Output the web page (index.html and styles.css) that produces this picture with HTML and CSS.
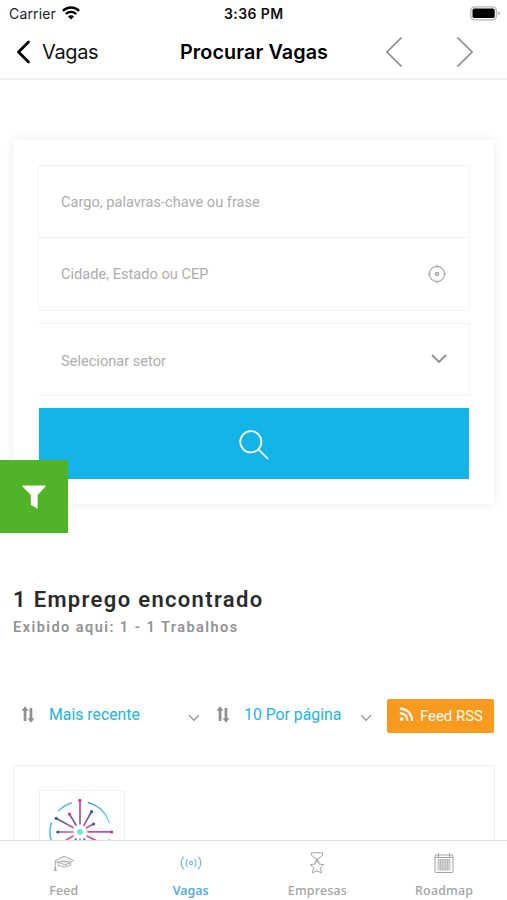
FILE: index.html
```html
<!DOCTYPE html>
<html lang="pt-BR">
<head>
<meta charset="utf-8">
<title>Procurar Vagas</title>
<link rel="stylesheet" href="styles.css">
</head>
<body>
<div class="screen">
  <div class="status">
    <span class="carrier">Carrier</span>
    <svg class="wifi" width="18" height="14" viewBox="0 0 18 14" fill="none" stroke="#000" stroke-width="2.4"><path d="M.9 4.8a11.6 11.6 0 0 1 16.2 0M3.8 8a7.4 7.4 0 0 1 10.4 0"/><path d="M9 13.6 6 10.5a4.2 4.2 0 0 1 6 0z" fill="#000" stroke="none"/></svg>
    <span class="time">3:36 PM</span>
    <svg class="battery" width="31" height="15" viewBox="0 0 31 15"><rect x=".8" y=".8" width="25.6" height="13" rx="3.8" fill="#fff" stroke="#b5b5b5" stroke-width="1.3"/><rect x="2.5" y="2.5" width="22.2" height="9.6" rx="1.9"/><path d="M28 5.2q2 .7 2 2.1t-2 2.1z" fill="#b5b5b5"/></svg>
  </div>
  <header class="nav">
    <svg class="back" width="15" height="24" viewBox="0 0 15 24" fill="none" stroke="#000" stroke-width="2.8" stroke-linecap="round" stroke-linejoin="round"><path d="M12.5 2 2.5 12l10 10"/></svg>
    <span class="back-label">Vagas</span>
    <h1>Procurar Vagas</h1>
    <svg class="prev" width="18" height="32" viewBox="0 0 18 32" fill="none" stroke="#8c8c8c" stroke-width="1.7"><path d="M16.5 1.5 2 16l14.5 14.5"/></svg>
    <svg class="next" width="18" height="32" viewBox="0 0 18 32" fill="none" stroke="#8c8c8c" stroke-width="1.7"><path d="M1.5 1.5 16 16 1.5 30.5"/></svg>
  </header>
  <main>
    <form class="search">
      <div class="field"><span>Cargo, palavras-chave ou frase</span></div>
      <div class="field second"><span>Cidade, Estado ou CEP</span>
        <svg width="20" height="20" viewBox="0 0 20 20" fill="none" stroke="#aaa" stroke-width="1.2"><circle cx="10" cy="10" r="7.6"/><circle cx="10" cy="10" r="1.7" fill="#ccc"/><path d="M10 .8v2.8M10 16.4v2.8M.8 10h2.8M16.4 10h2.8"/></svg>
      </div>
      <div class="field select"><span>Selecionar setor</span>
        <svg class="chev" width="18" height="12" viewBox="0 0 18 12" fill="none" stroke="#909090" stroke-width="1.9"><path d="m2 2 7 7 7-7"/></svg>
      </div>
      <div class="submit"><svg width="32" height="32" viewBox="0 0 32 32" fill="none" stroke="#fff" stroke-width="1.7" stroke-linecap="round"><circle cx="12.8" cy="12.8" r="10.6"/><path d="m20.6 20.6 9 8.8"/></svg></div>
    </form>
    <section class="summary">
      <h2>1 Emprego encontrado</h2>
      <p>Exibido aqui: 1 - 1 Trabalhos</p>
    </section>
    <div class="tools">
      <div class="sort first">
        <svg width="14" height="17" viewBox="0 0 14 17" fill="#8f8f8f"><path d="M4 .3.6 4.8h2.1V15h2.7V4.8h2.1zM10 16.7l3.4-4.5h-2.1V2H8.6v10.2H6.5z"/></svg>
        <span>Mais recente</span>
        <svg class="small-chev" width="12" height="8" viewBox="0 0 12 8" fill="none" stroke="#999" stroke-width="1.3"><path d="m1.2 1.3 4.8 5 4.8-5"/></svg>
      </div>
      <div class="sort">
        <svg width="14" height="17" viewBox="0 0 14 17" fill="#8f8f8f"><path d="M4 .3.6 4.8h2.1V15h2.7V4.8h2.1zM10 16.7l3.4-4.5h-2.1V2H8.6v10.2H6.5z"/></svg>
        <span>10 Por página</span>
        <svg class="small-chev" width="12" height="8" viewBox="0 0 12 8" fill="none" stroke="#999" stroke-width="1.3"><path d="m1.2 1.3 4.8 5 4.8-5"/></svg>
      </div>
      <div class="rss">
        <svg width="15" height="15" viewBox="0 0 15 15" fill="none" stroke="#fff" stroke-width="2.2"><circle cx="2.7" cy="12.1" r="1.9" fill="#fff" stroke="none"/><path d="M.8 6.1a7.5 7.5 0 0 1 7.7 7.8M.8 1.7a12 12 0 0 1 12.3 12.2"/></svg>
        <span>Feed RSS</span>
      </div>
    </div>
    <article class="job">
      <div class="logo">
        <svg width="84" height="84" viewBox="39 791 84 84" fill="none" stroke-linecap="round">
          <defs>
            <linearGradient id="ray" gradientUnits="userSpaceOnUse" x1="80" y1="800" x2="80" y2="826"><stop stop-color="#e52d92"/><stop offset="1" stop-color="#6558bd"/></linearGradient>
            <linearGradient id="ray2" gradientUnits="userSpaceOnUse" x1="56" y1="818" x2="74" y2="829"><stop stop-color="#345bad"/><stop offset="1" stop-color="#d655b1"/></linearGradient>
            <linearGradient id="ray3" gradientUnits="userSpaceOnUse" x1="92" y1="811" x2="84" y2="827"><stop stop-color="#345bad"/><stop offset="1" stop-color="#cc55b5"/></linearGradient>
            <linearGradient id="arc" gradientUnits="userSpaceOnUse" x1="88" y1="803" x2="109" y2="823"><stop stop-color="#3f9eed"/><stop offset="1" stop-color="#7aeadd"/></linearGradient>
          </defs>
          <g stroke-width="1.6">
            <path d="M80 801L80.01 824" stroke="url(#ray)"/><path d="M69.7 814.5 76 825" stroke="url(#ray)"/>
            <path d="m56.5 818.5 16.5 9M58 832h15M73 836l-10 6" stroke="url(#ray2)"/>
            <path d="m91.3 812-7.5 13.5M93 824.3l-6.5 3.5" stroke="url(#ray3)"/>
            <path d="M88 831.9h23M87 836l10 5" stroke="#bd4eb0"/><path d="m76 839-6 9M84 839l6 9" stroke="#4265af"/><path d="M80 839v16" stroke="#c65ab5"/>
          </g>
          <g fill="#e52d87"><circle cx="79.8" cy="800.3" r="1.6"/><circle cx="69.4" cy="814" r="1.6"/><circle cx="111.6" cy="832" r="1.6"/></g>
          <g fill="#345bad"><circle cx="56.2" cy="818.3" r="1.6"/><circle cx="57.8" cy="832" r="1.6"/><circle cx="91.6" cy="811.7" r="1.6"/><circle cx="93.6" cy="824" r="1.6"/></g>
          <circle cx="80" cy="832" r="2.9" fill="#70e6df"/>
          <g stroke-width="1.6"><path d="M88.5 802.8A30 30 0 0 1 109 822.5" stroke="url(#arc)"/><path d="M59 810.5a30 30 0 0 1 12.5-7.6" stroke="#55bce9"/><path d="M51.3 823a30 30 0 0 0 0 18" stroke="#4dc3e3"/><path d="M109.3 839.5l-.5 2" stroke="#70e6df"/></g>
        </svg>
      </div>
    </article>
  </main>
  <div class="filter"><svg width="24" height="25" viewBox="0 0 24 25" fill="#fff"><path d="M.3.5h23.4v.8L15.6 10v13.8l-6.8-4V10L.3 1.3z"/></svg></div>
  <nav class="tabs">
    <div class="tab">
      <svg width="22" height="22" viewBox="0 0 22 22" fill="none" stroke="#a3a3a3" stroke-width=".9"><path d="M1.8 9.2Q6.5 6 11 4.2q5 1.8 9.3 4.4-3.8 2.6-7.8 4.4Q7 11 1.8 9.2z" fill="#eee"/><path d="M5 10.3v3.2q6.5 2.6 12.4 0v-3.1M5 10.3q6-2 12.4 0M2.3 9.4v6.4"/><path d="m2.3 15.4-1 3h2z" fill="#bbb"/></svg>
      <span>Feed</span>
    </div>
    <div class="tab active">
      <svg width="22" height="22" viewBox="0 0 22 22" fill="none" stroke="#72b7e5" stroke-width="1.2"><circle cx="11" cy="11" r="1.6"/><path d="M7.4 7.1q-2.6 3.9 0 7.8M14.6 7.1q2.6 3.9 0 7.8M3.6 4.6q-4.8 6.4 0 12.8M18.4 4.6q4.8 6.4 0 12.8"/></svg>
      <span>Vagas</span>
    </div>
    <div class="tab">
      <svg width="22" height="22" viewBox="0 0 22 22" fill="none" stroke="#a3a3a3" stroke-width="1"><path d="M5.5.8h11v2.5L11 7.4 5.5 3.3zM8 5.2l5.5 5M14 5.2l-5.5 5"/><path d="m11 8.2 2 3.9 4.7.5-3.2 3.2 1 5-4.5-2-4.5 2 1-5-3.2-3.2 4.7-.5z" fill="#fff"/></svg>
      <span>Empresas</span>
    </div>
    <div class="tab">
      <svg width="22" height="22" viewBox="0 0 22 22" fill="none" stroke="#a3a3a3" stroke-width="1"><rect x="2" y="3" width="18" height="17.5" rx="1"/><path d="M5.5 1v4M16.5 1v4M2 5.5h18"/><path d="M5 7.5h12v10.5H5z" fill="#d7d7d7" stroke="#c4c4c4"/><path d="M7.4 7.5V18M9.8 7.5V18M12.2 7.5V18M14.6 7.5V18" stroke="#b5b5b5"/></svg>
      <span>Roadmap</span>
    </div>
  </nav>
</div>
</body>
</html>
```
FILE: styles.css
```css
* { box-sizing: border-box; }
body { margin: 0; background: #fff; font-family: Roboto, "Liberation Sans", sans-serif; }
svg { display: block; flex: none; }
span, h1, h2, p { white-space: nowrap; margin: 0; }
.screen { position: relative; width: 507px; height: 900px; overflow: hidden; }

.status { height: 28px; display: flex; align-items: center; padding: 0 6px 0 9px; font-family: Inter, sans-serif; font-size: 14px; color: #222; }
.wifi { margin-left: 6px; margin-top: -2px; }
.carrier { width: 47px; letter-spacing: .15px; margin-top: -1px; }
.time { margin-left: 144px; width: 60px; font-weight: 600; font-size: 14px; letter-spacing: .4px; margin-top: -1px; color: #111; }
.battery { margin-left: auto; margin-top: -2px; }

.nav { height: 52px; display: flex; align-items: center; padding: 0 33px 2px 16px; border-bottom: 2px solid #efefef; font-family: Inter, sans-serif; font-size: 20px; color: #111; }
.back-label { margin-left: 11px; width: 56px; letter-spacing: -.35px; }
.nav h1 { margin-left: 82px; width: 148px; font-size: 19.8px; font-weight: 600; letter-spacing: .08px; color: #000; }
.prev { margin-left: 57px; }
.next { margin-left: auto; }

main { padding: 60px 12px 0 13px; }
.search { height: 364px; margin-right: 1px; padding: 25px 24px 0 25px; border-radius: 2px; box-shadow: 0 0 10px rgba(0,0,0,.09); }
.field { height: 73px; display: flex; align-items: center; justify-content: space-between; padding: 0 22px; border: 1.5px solid #f3f3f3; border-radius: 3px; color: #adadad; font-size: 14.6px; }
.field.second { height: 74px; margin-top: -1px; border-top: 0; }
.field.select { margin-top: 12px; padding: 2px 21px 0 23px; border-radius: 0; border-left: 0; }
.chev { margin-top: -4px; }
.submit { height: 71px; margin: 12px 1px 0; background: #14b4e9; display: flex; align-items: center; justify-content: center; padding-top: 2px; }

.summary { padding-top: 81px; height: 195px; }
.summary h2 { font-size: 22px; line-height: 29px; font-weight: 600; letter-spacing: 1.33px; color: #2b2b2b; }
.summary p { font-size: 14.5px; line-height: 18px; margin-top: 5px; font-weight: 600; letter-spacing: 1.45px; color: #929292; }

.tools { height: 34px; display: flex; align-items: center; padding-left: 8px; margin-right: 1px; }
.sort { flex: none; display: flex; align-items: center; width: 171px; margin-top: -3px; color: #20b4e2; font-size: 15.8px; }
.sort.first { width: 195px; }
.sort span { margin-left: 14px; }
.small-chev { margin-left: auto; margin-top: 6px; margin-right: 16px; }
.sort:not(.first) .small-chev { margin-right: 15px; }
.rss { width: 107px; height: 34px; border-radius: 2px; margin-left: auto; background: #f89a1d; color: #fff; display: flex; align-items: center; padding-left: 12px; font-size: 14.9px; }
.rss svg { margin-top: -3px; }
.rss span { margin-left: 6px; }

.job { height: 200px; margin-top: 32px; border: 1.5px solid #f0f0f0; padding: 24px 25px; }
.logo { width: 86px; height: 86px; border: 1.5px solid #f0f0f0; }
.logo svg { margin-left: -1px; }

.filter { position: absolute; left: 0; top: 460px; width: 68px; height: 73px; background: #51b327; display: flex; align-items: center; justify-content: center; padding-top: 1px; }
.tabs { position: absolute; left: 0; bottom: 0; width: 507px; height: 60px; display: flex; background: #fff; border-top: 1px solid #ddd; }
.tab { flex: 1; display: flex; flex-direction: column; align-items: center; padding-top: 11px; padding-left: 1px; color: #a3a3a3; font-family: "Noto Sans", sans-serif; font-weight: 500; font-size: 12.4px; }
.tab span { margin-top: 8px; line-height: 18px; letter-spacing: .2px; }
.tab.active { color: #56ace3; }
.tab.active span { font-weight: 600; letter-spacing: 0; }
```
